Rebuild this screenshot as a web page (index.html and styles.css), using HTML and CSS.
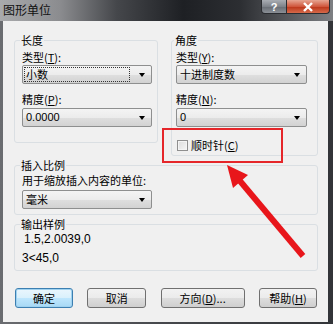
FILE: index.html
```html
<!DOCTYPE html>
<html lang="zh">

<head>
    <meta charset="UTF-8">
    <title>图形单位</title>
    <link rel="stylesheet" href="styles.css">
</head>

<body>

    <div class="window">
        <div class="titlebar">
            <span class="title">图形单位</span>
            <div class="caption-buttons">
                <span class="cap-help">?</span>
                <span class="cap-close">
                    <svg width="12" height="10" viewBox="0 0 12 10">
                        <path d="M2 1 L10 9 M10 1 L2 9" stroke="#fff" stroke-width="2.4" fill="none" />
                    </svg>
                </span>
            </div>
        </div>

        <div class="content">
            <div class="top-row">
                <fieldset class="group group-length">
                    <legend>长度</legend>
                    <div class="label">类型(<u>T</u>):</div>
                    <div class="combo combo-first">
                        <span class="combo-text focus">小数</span>
                        <span class="arrow"></span>
                    </div>
                    <div class="label label-gap">精度(<u>P</u>):</div>
                    <div class="combo combo-second">
                        <span class="combo-text latin">0.0000</span>
                        <span class="arrow"></span>
                    </div>
                </fieldset>

                <fieldset class="group group-angle">
                    <legend>角度</legend>
                    <div class="label">类型(<u>Y</u>):</div>
                    <div class="combo combo-first">
                        <span class="combo-text">十进制度数</span>
                        <span class="arrow"></span>
                    </div>
                    <div class="label label-gap">精度(<u>N</u>):</div>
                    <div class="combo combo-second">
                        <span class="combo-text latin">0</span>
                        <span class="arrow"></span>
                    </div>
                    <div class="check-row">
                        <span class="checkbox"></span>
                        <span>顺时针(<u>C</u>)</span>
                    </div>
                </fieldset>
            </div>

            <fieldset class="group group-insert">
                <legend>插入比例</legend>
                <div class="label">用于缩放插入内容的单位:</div>
                <div class="combo combo-first">
                    <span class="combo-text">毫米</span>
                    <span class="arrow"></span>
                </div>
            </fieldset>

            <fieldset class="group group-sample">
                <legend>输出样例</legend>
                <div class="sample sample-first">1.5,2.0039,0</div>
                <div class="sample sample-second">3&lt;45,0</div>
            </fieldset>

            <div class="buttons">
                <button class="btn btn-default">确定</button>
                <button class="btn btn-cancel">取消</button>
                <button class="btn btn-direction">方向(<u>D</u>)...</button>
                <button class="btn btn-help">帮助(<u>H</u>)</button>
            </div>
        </div>

        <!-- 红色标注框和箭头 -->
        <div class="mark-box"></div>
        <svg class="mark-arrow" width="333" height="324" viewBox="0 0 333 324">
            <line x1="240" y1="181" x2="303" y2="256" stroke="#e8161b" stroke-width="6" />
            <polygon points="227,165 233,188 248,175" fill="#e8161b" />
        </svg>
    </div>

</body>

</html>
```

FILE: styles.css
```css
body,
html {
    margin: 0;
    height: 100%;
}

body {
    font-family: "Noto Sans CJK SC", "Liberation Sans", sans-serif;
    font-size: 11px;
    color: #000;
    background: #fff;
}

.window {
    position: relative;
    width: 333px;
    height: 324px;
    display: flex;
    flex-direction: column;
    background: linear-gradient(to right, #6a6c70, #45474b 50%, #323438);
    overflow: hidden;
}

.titlebar {
    height: 21px;
    display: flex;
    align-items: flex-start;
    background: linear-gradient(to right, #a9aaac 0%, #8b8c8f 18%, #45474b 35%, #1e2024 55%, #2c2e32 72%, #7d7f83 100%);
}

.title {
    font-size: 12px;
    line-height: 14px;
    padding: 3px 0 0 3px;
    color: #111;
}

.caption-buttons {
    margin-left: auto;
    margin-right: 3px;
    display: flex;
}

.cap-help,
.cap-close {
    height: 14px;
    display: flex;
    align-items: center;
    justify-content: center;
    border: 1px solid #2a2c30;
    border-top: none;
    box-sizing: border-box;
}

.cap-help {
    width: 26px;
    border-bottom-left-radius: 4px;
    color: #fff;
    font-family: "Liberation Sans", sans-serif;
    font-weight: bold;
    font-size: 11px;
    background: linear-gradient(to bottom, #a9adb3, #7e838a 50%, #676c73 51%, #8a8f96);
}

.cap-close {
    width: 43px;
    border-left: none;
    border-bottom-right-radius: 4px;
    background: linear-gradient(to bottom, #e6a592, #d0573d 50%, #bb3418 51%, #d56a4a);
}

.content {
    flex: 1;
    margin: 0 5px 2px 3px;
    padding: 12px 10px 0 11px;
    background: #f0f0f0;
    box-sizing: border-box;
}

.top-row {
    display: flex;
    align-items: flex-start;
    gap: 13px;
}

.group {
    margin: 0;
    min-width: 0;
    box-sizing: border-box;
    border: 1px solid #dadfe3;
    border-radius: 3px;
    padding: 3px 3px 15px 7px;
}

.group legend {
    line-height: 14px;
    padding: 0 1px;
    margin-left: -2px;
}

.group-length {
    width: 144px;
}

.group-angle {
    width: 147px;
    padding: 3px 10px 3px 4px;
}

.group-insert {
    width: 304px;
    margin-top: 2px;
    padding: 1px 3px 5px 7px;
}

.group-sample {
    width: 304px;
    margin-top: 2px;
    padding: 2px 3px 6px 7px;
}

.label {
    line-height: 14px;
}

.label-gap {
    margin-top: 8px;
}

.combo {
    width: 130px;
    height: 19px;
    box-sizing: border-box;
    display: flex;
    align-items: center;
    border: 1px solid #8e8f8f;
    border-radius: 2px;
    background: linear-gradient(to bottom, #f4f4f4, #ececec 50%, #dfdfdf 51%, #d2d2d2);
    padding: 0 6px 0 2px;
}

.group-angle .combo {
    width: 131px;
}

.combo-first {
    margin-top: 1px;
}

.combo-second {
    margin-top: 2px;
}

.group-insert .combo-first {
    margin-top: 3px;
}

.combo-text {
    flex: 1;
    line-height: 13px;
    padding-left: 1px;
}

.combo-text.focus {
    outline: 1px dotted #333;
    outline-offset: 0;
    margin-right: 10px;
}

.latin {
    font-family: "Liberation Sans", sans-serif;
    font-size: 11px;
}

.arrow {
    width: 0;
    height: 0;
    border-left: 3.5px solid transparent;
    border-right: 3.5px solid transparent;
    border-top: 4px solid #000;
}

.check-row {
    display: flex;
    align-items: center;
    margin-top: 11px;
    line-height: 14px;
}

.checkbox {
    width: 11px;
    height: 11px;
    box-sizing: border-box;
    margin: 0 3px 0 1px;
    border: 1px solid #8f8f8f;
    background: linear-gradient(135deg, #dcdcdc, #f6f6f6);
    box-shadow: inset 0 0 0 1px #f4f4f4;
}

.sample {
    font-family: "Liberation Sans", sans-serif;
    font-size: 12px;
    line-height: 12px;
}

.sample-first {
    padding-left: 2px;
}

.sample-second {
    margin-top: 7px;
}

.buttons {
    display: flex;
    justify-content: space-between;
    margin-top: 17px;
    padding: 0 1px;
}

.btn {
    height: 20px;
    padding: 0;
    font-family: "Noto Sans CJK SC", "Liberation Sans", sans-serif;
    font-size: 11px;
    color: #000;
    border: 1px solid #707070;
    border-radius: 3px;
    background: linear-gradient(to bottom, #f2f2f2, #ebebeb 50%, #dddddd 51%, #cfcfcf);
}

.btn-default {
    width: 58px;
    border-color: #3c7fb1;
    background: linear-gradient(to bottom, #eaf6fd, #d9f0fc 50%, #bee6fd 51%, #a7d9f5);
    box-shadow: inset 0 0 0 1px #9fd2f0;
}

.btn-cancel {
    width: 59px;
}

.btn-direction {
    width: 84px;
}

.btn-help {
    width: 58px;
}

.mark-box {
    position: absolute;
    left: 162px;
    top: 128px;
    width: 121px;
    height: 35px;
    box-sizing: border-box;
    border: 2px solid #e5262a;
}

.mark-arrow {
    position: absolute;
    left: 0;
    top: 0;
    pointer-events: none;
}
```
